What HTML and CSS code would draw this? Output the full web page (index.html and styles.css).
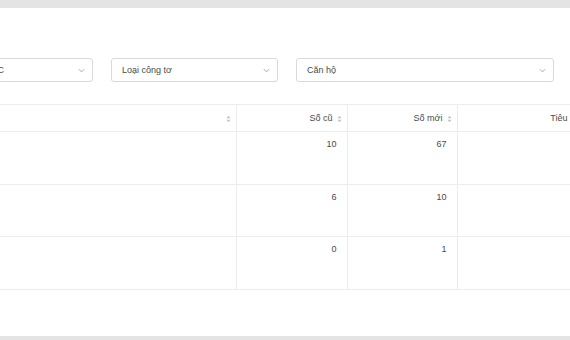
FILE: index.html
```
<!DOCTYPE html>
<html lang="vi">
<head>
  <meta charset="UTF-8">
  <title>Chỉ số công tơ</title>
  <link rel="stylesheet" href="styles.css">
</head>
<body>
  <div class="page">
    <div class="card">
      <div class="content">
        <div class="filters">
          <div class="select sel-building"><span>Tòa nhà: Block C</span><svg class="chev" viewBox="0 0 8 5"><path d="M1 1l3 3 3-3" fill="none" stroke="#999" stroke-width="1"/></svg></div>
          <div class="select sel-type"><span>Loại công tơ</span><svg class="chev" viewBox="0 0 8 5"><path d="M1 1l3 3 3-3" fill="none" stroke="#999" stroke-width="1"/></svg></div>
          <div class="select sel-unit"><span>Căn hộ</span><svg class="chev" viewBox="0 0 8 5"><path d="M1 1l3 3 3-3" fill="none" stroke="#999" stroke-width="1"/></svg></div>
        </div>

        <table class="meter-table">
          <colgroup>
            <col class="c-name">
            <col class="c-old">
            <col class="c-new">
            <col class="c-use">
          </colgroup>
          <thead>
            <tr>
              <th><span class="sort"><svg viewBox="0 0 6 9"><path d="M3 0.5L5.5 3.5H0.5z M3 8.5L5.5 5.5H0.5z" fill="#c4c4c4"/></svg></span></th>
              <th>Số cũ<span class="sort"><svg viewBox="0 0 6 9"><path d="M3 0.5L5.5 3.5H0.5z M3 8.5L5.5 5.5H0.5z" fill="#c4c4c4"/></svg></span></th>
              <th>Số mới<span class="sort"><svg viewBox="0 0 6 9"><path d="M3 0.5L5.5 3.5H0.5z M3 8.5L5.5 5.5H0.5z" fill="#c4c4c4"/></svg></span></th>
              <th>Tiêu thụ<span class="sort"><svg viewBox="0 0 6 9"><path d="M3 0.5L5.5 3.5H0.5z M3 8.5L5.5 5.5H0.5z" fill="#c4c4c4"/></svg></span></th>
            </tr>
          </thead>
          <tbody>
            <tr><td></td><td>10</td><td>67</td><td>57</td></tr>
            <tr><td></td><td>6</td><td>10</td><td>4</td></tr>
            <tr><td></td><td>0</td><td>1</td><td>1</td></tr>
          </tbody>
        </table>
      </div>
    </div>
  </div>
</body>
</html>
```

FILE: styles.css
```
body { margin: 0; background: #e4e4e4; font-family: "Liberation Sans", Arial, sans-serif; font-size: 9px; color: #555; overflow: hidden; }
.page { padding-top: 8px; }
.card { background: #fff; height: 328px; overflow: hidden; }
.content { margin-left: -76px; padding-top: 50px; width: 900px; }

.filters { display: flex; gap: 18px; }
.select { box-sizing: border-box; height: 24px; border: 1px solid #d9d9d9; border-radius: 3px; padding: 0 7px 0 10px; display: flex; align-items: center; justify-content: space-between; color: #4a4a4a; background: #fff; }
.sel-building { width: 169px; }
.sel-type { width: 167px; }
.sel-unit { width: 258px; }
.chev { width: 7px; height: 5px; }

.meter-table { border-collapse: collapse; margin-top: 22px; table-layout: fixed; width: 673px; }
.c-name { width: 312px; }
.c-old { width: 111px; }
.c-new { width: 110px; }
.c-use { width: 140px; }
.meter-table th, .meter-table td { border-bottom: 1px solid #ebebf0; border-right: 1px solid #ebebf0; padding: 0 10px; text-align: right; }
.meter-table th { border-top: 1px solid #ebebf0; height: 26px; font-weight: normal; color: #4a4a4a; padding-right: 5px; }
.meter-table td { height: 52.7px; vertical-align: top; padding-top: 6px; box-sizing: border-box; line-height: 12px; color: #4a4a4a; }
.sort { display: inline-block; margin-left: 4px; vertical-align: middle; }
.sort svg { width: 5px; height: 8px; display: block; }
```
